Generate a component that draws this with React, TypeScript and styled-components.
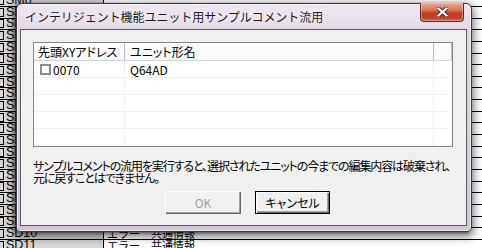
import React from 'react';
import styled, { createGlobalStyle, css } from 'styled-components';

const GlobalStyle = createGlobalStyle`
  html, body {
    margin: 0;
    padding: 0;
    overflow: hidden;
  }
  body {
    font-family: "Noto Sans CJK JP", "Liberation Sans", sans-serif;
    font-size: 12px;
    color: #000;
  }
`;

const Screen = styled.div`
  position: relative;
  width: 482px;
  height: 248px;
  overflow: hidden;
  background: #fff;
`;

/* spreadsheet behind the dialog */
const Sheet = styled.div`
  display: flex;
  flex-direction: column;
  margin-top: -4.65px;
`;

const SheetRow = styled.div`
  display: grid;
  grid-template-columns: 104px 1fr;
  height: 11.65px;
  box-sizing: border-box;
  border-bottom: 1px solid #000;
  font-family: "Liberation Sans", "Noto Sans CJK JP", sans-serif;
  font-size: 12.5px;
  line-height: 11px;
  overflow: hidden;
`;

const NameCell = styled.div`
  display: flex;
  align-items: center;
  gap: 2px;
  background: #d6d6d6;
  border-right: 1px solid #000;
  overflow: hidden;
`;

const Mark = styled.span`
  display: inline-block;
  width: 9px;
  height: 7px;
  margin-left: -7px;
  border: 1px solid #000;
`;

const InfoCell = styled.div`
  padding-left: 3px;
  font-family: "Noto Sans CJK JP", sans-serif;
  font-size: 11px;
  white-space: nowrap;
  overflow: hidden;
`;

/* dialog window */
const Dialog = styled.div`
  position: absolute;
  left: 16px;
  top: 3px;
  width: 456px;
  height: 229px;
  box-sizing: border-box;
  display: flex;
  flex-direction: column;
  border: 1px solid #3e3a40;
  border-radius: 6px 6px 4px 4px;
  background: linear-gradient(to bottom, #eee7f0 0px, #e2d8e5 26px, #d8cbdd 60%, #d3c4d9 100%);
  box-shadow:
    inset 0 0 0 1px rgba(255, 255, 255, 0.55),
    0 3px 8px 2px rgba(0, 0, 0, 0.5),
    -2px 1px 3px rgba(0, 0, 0, 0.45);
`;

const TitleBar = styled.div`
  height: 25px;
  display: flex;
  align-items: center;
  padding-left: 8px;
  flex-shrink: 0;
`;

const Title = styled.span`
  font-size: 12px;
  letter-spacing: -0.05px;
  color: #1a1a1a;
  text-shadow: 0 0 6px rgba(255, 255, 255, 0.95), 0 0 10px rgba(255, 255, 255, 0.8);
  white-space: nowrap;
`;

const CloseButton = styled.div`
  position: absolute;
  top: -1px;
  right: 7px;
  width: 44px;
  height: 19px;
  box-sizing: border-box;
  display: flex;
  align-items: center;
  justify-content: center;
  border: 1px solid #6e2a20;
  border-top: none;
  border-radius: 0 0 4px 4px;
  background: linear-gradient(to bottom, #e9a594 0%, #d8755d 40%, #c33e26 55%, #bd3f28 80%, #cf664b 100%);
  box-shadow: inset 0 0 0 1px rgba(255, 210, 200, 0.45);
`;

const Client = styled.div`
  flex: 1;
  margin: 0 4px 5px 3px;
  border: 1px solid #5e5a60;
  background: #f0f0f0;
  padding: 12px 0 0 12px;
  display: flex;
  flex-direction: column;
`;

const List = styled.div`
  width: 420px;
  box-sizing: border-box;
  border: 1px solid #828790;
  background: #fff;
  display: flex;
  flex-direction: column;
`;

const columns = '91px 309px 1fr';

const HeaderRow = styled.div`
  display: grid;
  grid-template-columns: ${columns};
  height: 18px;
  box-sizing: border-box;
  border-bottom: 1px solid #d5d5d5;
  background: linear-gradient(to bottom, #ffffff, #f7f8fa);
`;

const HeaderCell = styled.div<{ $pad: number }>`
  display: flex;
  align-items: center;
  padding-left: ${({ $pad }) => $pad}px;
  border-right: 1px solid #bcbcbc;
  font-feature-settings: "palt";
  white-space: nowrap;
  overflow: hidden;
`;

const BodyRow = styled.div`
  display: grid;
  grid-template-columns: ${columns};
  height: 17px;
  box-sizing: border-box;
  border-bottom: 1px solid #f0f0f0;
`;

const BodyCell = styled.div<{ $pad: number }>`
  display: flex;
  align-items: center;
  gap: 2px;
  padding-left: ${({ $pad }) => $pad}px;
  border-right: 1px solid #f0f0f0;
  white-space: nowrap;
  overflow: hidden;
`;

const CheckBox = styled.span`
  display: inline-block;
  width: 11px;
  height: 11px;
  box-sizing: border-box;
  border: 2px solid #8c8c8c;
  background: #fff;
`;

const Message = styled.p`
  margin: 13px 0 0;
  font-size: 12px;
  line-height: 12px;
  font-feature-settings: "palt";
  letter-spacing: -1.1px;
  white-space: nowrap;
`;

const Buttons = styled.div`
  display: flex;
  gap: 14px;
  margin-top: 7px;
  padding-left: 132px;
`;

const Button = styled.button<{ $default?: boolean; $width: number }>`
  width: ${({ $width }) => $width}px;
  height: 23px;
  box-sizing: border-box;
  padding: 0;
  border: none;
  background: #f0f0f0;
  font-family: "Noto Sans CJK JP", sans-serif;
  font-size: 12px;
  font-feature-settings: "palt";
  color: #000;
  box-shadow: inset 1px 1px #ffffff, inset -1px -1px #696969, inset -2px -2px #a0a0a0;

  &:disabled {
    color: #a0a0a0;
  }

  ${({ $default }) =>
    $default &&
    css`
      border: 1px solid #000;
    `}
`;

const sheetRows = Array.from({ length: 22 }, (_, i) => (i >= 10 ? `SD${String(i - 10).padStart(2, '0')}` : `SM${i}`));

const App: React.FC = () => {
  return (
    <>
      <GlobalStyle />
      <Screen>
        <Sheet>
          {sheetRows.map((name, i) => (
            <SheetRow key={i}>
              <NameCell>
                <Mark />
                <span>{name}</span>
              </NameCell>
              {/* rows above 20 sit under the dialog */}
              <InfoCell>{i >= 20 ? 'エラー　共通情報' : ''}</InfoCell>
            </SheetRow>
          ))}
        </Sheet>

        <Dialog>
          <TitleBar>
            <Title>インテリジェント機能ユニット用サンプルコメント流用</Title>
          </TitleBar>
          <CloseButton>
            <svg width="11" height="10" viewBox="0 0 11 10">
              <path d="M1.5 1.5 L9.5 8.5 M9.5 1.5 L1.5 8.5" stroke="#3b2320" strokeWidth="4" strokeLinecap="square" />
              <path d="M1.5 1.5 L9.5 8.5 M9.5 1.5 L1.5 8.5" stroke="#ffffff" strokeWidth="2.2" strokeLinecap="square" />
            </svg>
          </CloseButton>

          <Client>
            <List>
              <HeaderRow>
                <HeaderCell $pad={4}>先頭XYアドレス</HeaderCell>
                <HeaderCell $pad={5}>ユニット形名</HeaderCell>
                <HeaderCell $pad={0} />
              </HeaderRow>
              {[0, 1, 2, 3, 4].map((r) => (
                <BodyRow key={r}>
                  <BodyCell $pad={6}>
                    {r === 0 && (
                      <>
                        <CheckBox />
                        <span>0070</span>
                      </>
                    )}
                  </BodyCell>
                  <BodyCell $pad={5}>{r === 0 && 'Q64AD'}</BodyCell>
                  <BodyCell $pad={0} />
                </BodyRow>
              ))}
            </List>

            <Message>
              サンプルコメントの流用を実行すると、選択されたユニットの今までの編集内容は破棄され、
              <br />
              元に戻すことはできません。
            </Message>

            <Buttons>
              <Button $width={76} disabled>
                OK
              </Button>
              <Button $width={75} $default>
                キャンセル
              </Button>
            </Buttons>
          </Client>
        </Dialog>
      </Screen>
    </>
  );
};

export default App;
